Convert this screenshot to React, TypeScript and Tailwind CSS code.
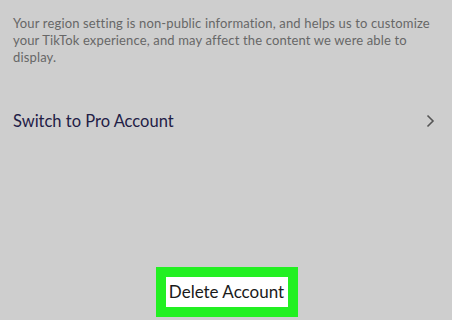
export default function App() {
  return (
    <div className="flex h-[320px] w-[452px] flex-col bg-[#cecece] font-['Lato',sans-serif]">
      <p className="whitespace-nowrap pl-[13px] pt-[15px] text-[13px] leading-[17px] tracking-[0.15px] text-[#676767]">
        Your region setting is non-public information, and helps us to customize
        <br />
        your TikTok experience, and may affect the content we were able to
        <br />
        display.
      </p>
      <div className="mt-[44px] flex items-center justify-between pl-[13px] pr-[17px]">
        <span className="text-[16.5px] leading-[22px] text-[#1f2046]">Switch to Pro Account</span>
        <svg width="9" height="14" viewBox="0 0 9 14" fill="none">
          <path d="M1.5 1.5 L7 7 L1.5 12.5" stroke="#555" strokeWidth="1.6" />
        </svg>
      </div>
      <div className="mt-auto mb-[3px] flex justify-center">
        <div className="ml-[1px] bg-[#22f022] p-[10px]">
          <div className="flex h-[30px] w-[122px] items-center justify-center bg-white text-[17px] text-[#1a1a1a]">
            Delete Account
          </div>
        </div>
      </div>
    </div>
  );
}
